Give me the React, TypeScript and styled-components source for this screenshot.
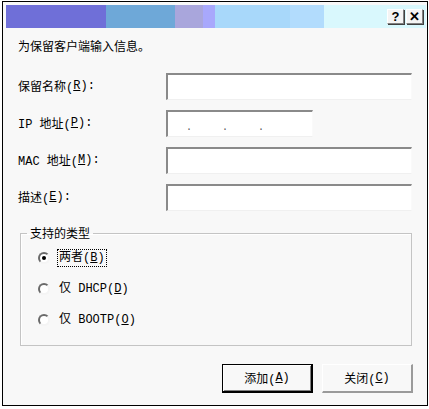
import styled, { createGlobalStyle } from "styled-components";

const Global = createGlobalStyle`
  html, body {
    margin: 0;
    padding: 0;
    background: #ffffff;
  }
  body {
    font-family: "Liberation Mono", "Noto Sans CJK SC", monospace;
    font-size: 12px;
    color: #000;
  }
`;

const Window = styled.div`
  margin: 1px 0 0 2px;
  width: 424px;
  height: 403px;
  border: 1px solid #000;
  background: #f8f8f8;
  display: flex;
  flex-direction: column;
`;

const TitleBar = styled.div`
  margin: 3px 1px 0 3px;
  height: 23px;
  display: flex;
  background: #d9f8fd;
`;

const Band = styled.div<{ w: number; color: string }>`
  width: ${(p) => p.w}px;
  background: ${(p) => p.color};
`;

const TitleButtons = styled.div`
  margin-left: auto;
  display: flex;
  align-items: center;
  gap: 2px;
  padding-right: 3px;
`;

const CapButton = styled.div`
  width: 17px;
  height: 15px;
  box-sizing: border-box;
  background: #f4f4f4;
  border-top: 1px solid #fff;
  border-left: 1px solid #fff;
  border-right: 1px solid #808080;
  border-bottom: 1px solid #808080;
  box-shadow: 1px 1px 0 #404040;
  display: flex;
  align-items: center;
  justify-content: center;
  font-family: "Liberation Sans", sans-serif;
  font-weight: bold;
  font-size: 13px;
  line-height: 1;
`;

const Body = styled.div`
  padding: 12px 14px 0 15px;
  display: flex;
  flex-direction: column;
`;

const Intro = styled.div`
  height: 16px;
  line-height: 16px;
`;

const Form = styled.div`
  margin-top: 17px;
  display: grid;
  grid-template-columns: 148px 1fr;
  row-gap: 10px;
`;

const Label = styled.div`
  display: flex;
  align-items: center;
  height: 26px;
`;

const Field = styled.div<{ w?: number }>`
  box-sizing: border-box;
  height: 27px;
  width: ${(p) => (p.w ? `${p.w}px` : "246px")};
  background: #fff;
  border-top: 2px solid #8a8a8a;
  border-left: 2px solid #8a8a8a;
  border-right: 1px solid #fafafa;
  border-bottom: 1px solid #f0f0f0;
  display: flex;
  align-items: center;
`;

const IpDots = styled.div`
  display: grid;
  grid-template-columns: repeat(3, 36px);
  padding-left: 18px;
  padding-top: 6px;
  color: #555;
  font-size: 10px;
`;

const Group = styled.fieldset`
  margin: 13px 0 0 2px;
  width: 392px;
  height: 122px;
  box-sizing: border-box;
  border: 1px solid #c4c4c4;
  box-shadow: inset 1px 1px 0 #fff;
  padding: 7px 0 0 17px;
  display: flex;
  flex-direction: column;
  gap: 13px;
`;

const Legend = styled.legend`
  margin-left: -11px;
  padding: 0 3px;
  font-size: 12px;
`;

const RadioRow = styled.div`
  display: flex;
  align-items: center;
  gap: 8px;
  height: 18px;
`;

const Radio = styled.span<{ checked?: boolean }>`
  width: 12px;
  height: 12px;
  border-radius: 50%;
  box-sizing: border-box;
  background: #fff;
  border: 2px solid;
  border-color: #6a6a6a #f4f4f4 #f4f4f4 #6a6a6a;
  display: flex;
  align-items: center;
  justify-content: center;
  &::after {
    content: "";
    width: 4px;
    height: 4px;
    border-radius: 50%;
    background: ${(p) => (p.checked ? "#000" : "transparent")};
  }
`;

const RadioText = styled.span<{ focused?: boolean }>`
  padding: 0 1px;
  outline: ${(p) => (p.focused ? "1px dotted #000" : "none")};
  line-height: 16px;
`;

const Footer = styled.div`
  margin-top: 18px;
  display: flex;
  justify-content: flex-end;
  gap: 9px;
`;

const Button = styled.div<{ primary?: boolean }>`
  box-sizing: border-box;
  width: 91px;
  height: 29px;
  display: flex;
  align-items: center;
  justify-content: center;
  background: #f8f8f8;
  font-size: 12px;
  border-top: 1px solid #fff;
  border-left: 1px solid #fff;
  border-right: 2px solid #9a9a9a;
  border-bottom: 2px solid #9a9a9a;
  ${(p) =>
    p.primary &&
    `
    border-top: 1px solid #000;
    border-left: 1px solid #000;
    border-right: 2px solid #000;
    border-bottom: 2px solid #000;
    box-shadow: inset 1px 1px 0 #fff, inset -1px -1px 0 #808080;
  `}
`;

const Key = ({ k }: { k: string }) => (
  <>
    (<u>{k}</u>)
  </>
);

export default function App() {
  return (
    <>
      <Global />
      <Window>
        <TitleBar>
          <Band w={100} color="#6f6fd8" />
          <Band w={69} color="#6ea8d8" />
          <Band w={28} color="#a9a6dc" />
          <Band w={12} color="#a8a8fc" />
          <Band w={75} color="#a8d8fa" />
          <Band w={34} color="#b2dcfd" />
          <TitleButtons>
            <CapButton>?</CapButton>
            <CapButton>✕</CapButton>
          </TitleButtons>
        </TitleBar>
        <Body>
          <Intro>为保留客户端输入信息。</Intro>
          <Form>
            <Label>
              保留名称<Key k="R" />:
            </Label>
            <Field />
            <Label>
              IP 地址<Key k="P" />:
            </Label>
            <Field w={147}>
              <IpDots>
                <span>.</span>
                <span>.</span>
                <span>.</span>
              </IpDots>
            </Field>
            <Label>
              MAC 地址<Key k="M" />:
            </Label>
            <Field />
            <Label>
              描述<Key k="E" />:
            </Label>
            <Field />
          </Form>
          <Group>
            <Legend>支持的类型</Legend>
            <RadioRow>
              <Radio checked />
              <RadioText focused>
                两者<Key k="B" />
              </RadioText>
            </RadioRow>
            <RadioRow>
              <Radio />
              <RadioText>
                仅 DHCP<Key k="D" />
              </RadioText>
            </RadioRow>
            <RadioRow>
              <Radio />
              <RadioText>
                仅 BOOTP<Key k="O" />
              </RadioText>
            </RadioRow>
          </Group>
          <Footer>
            <Button primary>
              添加<Key k="A" />
            </Button>
            <Button>
              关闭<Key k="C" />
            </Button>
          </Footer>
        </Body>
      </Window>
    </>
  );
}
